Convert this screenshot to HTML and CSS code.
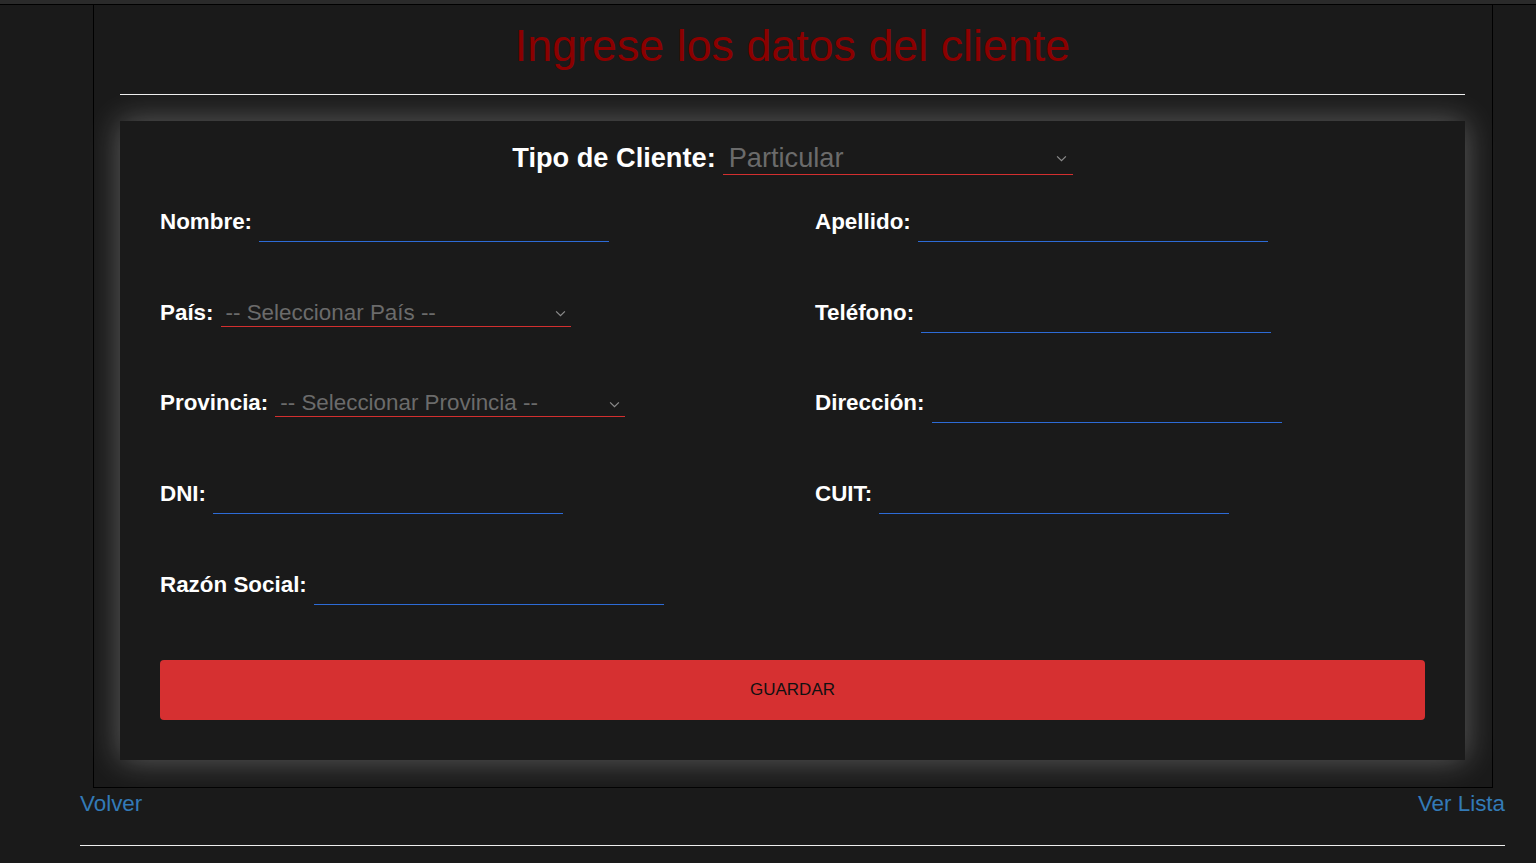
FILE: index.html
```html
<!DOCTYPE html>
<html lang="es">
<head>
<meta charset="utf-8">
<title>Cliente</title>
<link rel="stylesheet" href="styles.css">
</head>
<body>
<div class="topbar"></div>
<div class="page">
  <div class="container">
    <h1 class="title">Ingrese los datos del cliente</h1>
    <hr class="rule rule-top">
    <form class="card">
      <div class="tipo">
        <label class="tipo-label">Tipo de Cliente:</label>
        <div class="select select-lg">
          <span>Particular</span>
          <svg class="chev" viewBox="0 0 12 8" width="11" height="7"><path d="M1 1.5 L6 6.5 L11 1.5"/></svg>
        </div>
      </div>
      <div class="grid">
        <div class="field"><label>Nombre:</label><input class="input" type="text"></div>
        <div class="field"><label>Apellido:</label><input class="input" type="text"></div>
        <div class="field"><label>País:</label>
          <div class="select"><span>-- Seleccionar País --</span><svg class="chev" viewBox="0 0 12 8" width="11" height="7"><path d="M1 1.5 L6 6.5 L11 1.5"/></svg></div>
        </div>
        <div class="field"><label>Teléfono:</label><input class="input" type="text"></div>
        <div class="field"><label>Provincia:</label>
          <div class="select"><span>-- Seleccionar Provincia --</span><svg class="chev" viewBox="0 0 12 8" width="11" height="7"><path d="M1 1.5 L6 6.5 L11 1.5"/></svg></div>
        </div>
        <div class="field"><label>Dirección:</label><input class="input" type="text"></div>
        <div class="field"><label>DNI:</label><input class="input" type="text"></div>
        <div class="field"><label>CUIT:</label><input class="input" type="text"></div>
        <div class="field"><label>Razón Social:</label><input class="input" type="text"></div>
      </div>
      <button class="btn" type="button">GUARDAR</button>
    </form>
  </div>
  <div class="links"><a href="#">Volver</a><a href="#">Ver Lista</a></div>
  <hr class="rule rule-bottom">
</div>
</body>
</html>
```
FILE: styles.css
```css
html, body {
  margin: 0;
  padding: 0;
  background: #1a1a1a;
  font-family: "Liberation Sans", Arial, sans-serif;
  color: #fff;
}

.topbar {
  height: 4px;
  background: #2a2a2a;
  border-bottom: 1px solid #000;
}

.page {
  width: 1425px;
  margin-left: 80px;
}

.container {
  box-sizing: border-box;
  width: 1400px;
  margin-left: 13px;
  border: 1px solid #000;
  border-top: 0;
  padding: 15px 27px 27px 26px;
}

.title {
  margin: 0;
  font-size: 44.8px;
  font-weight: normal;
  line-height: normal;
  color: #8b0000;
  text-align: center;
}

.rule {
  border: 0;
  border-top: 1px solid #eeeeee;
  height: 0;
  margin: 0;
}

.rule-top {
  margin: 22.8px 0 26px;
}

.card {
  background: #1a1a1a;
  box-shadow: 0 0 30px rgba(255, 255, 255, 0.3);
  padding: 21px 40px 40px;
}

.tipo {
  display: flex;
  justify-content: center;
  align-items: baseline;
  gap: 7px;
  margin-bottom: 34px;
}

.tipo-label {
  font-size: 27.2px;
  font-weight: bold;
}

.select {
  box-sizing: border-box;
  width: 350px;
  display: flex;
  align-items: center;
  justify-content: space-between;
  padding: 0 5px 0 5px;
  border-bottom: 1px solid #d32f2f;
  font-size: 22.4px;
  line-height: normal;
  color: #6b6b6b;
}

.select-lg {
  font-size: 27.2px;
  padding-left: 6px;
  padding-right: 6px;
}

.chev {
  flex: none;
  margin-top: 2px;
}

.chev path {
  fill: none;
  stroke: #8c8c8c;
  stroke-width: 1.4;
}

.grid {
  display: grid;
  grid-template-columns: 1fr 1fr;
  column-gap: 45px;
  row-gap: 57.8px;
  align-items: start;
}

.field {
  display: flex;
  align-items: baseline;
  gap: 7px;
}

.field label {
  font-size: 22.4px;
  font-weight: bold;
  line-height: normal;
  white-space: nowrap;
}

.input {
  box-sizing: border-box;
  width: 350px;
  font-family: "Liberation Sans", Arial, sans-serif;
  font-size: 22.4px;
  line-height: normal;
  padding: 0 4px 6px;
  margin: 0;
  border: 0;
  border-bottom: 1px solid #2d6bd6;
  background: transparent;
  color: #fff;
  outline: none;
}

.btn {
  display: block;
  width: 100%;
  height: 60px;
  margin-top: 55px;
  border: 0;
  border-radius: 4px;
  background: #d63031;
  color: #111;
  font-family: "Liberation Sans", Arial, sans-serif;
  font-size: 17px;
}

.links {
  display: flex;
  justify-content: space-between;
  margin-top: 3px;
  font-size: 22.4px;
  line-height: normal;
}

.links a {
  color: #337ab7;
  text-decoration: none;
}

.rule-bottom {
  margin-top: 28px;
}
```
